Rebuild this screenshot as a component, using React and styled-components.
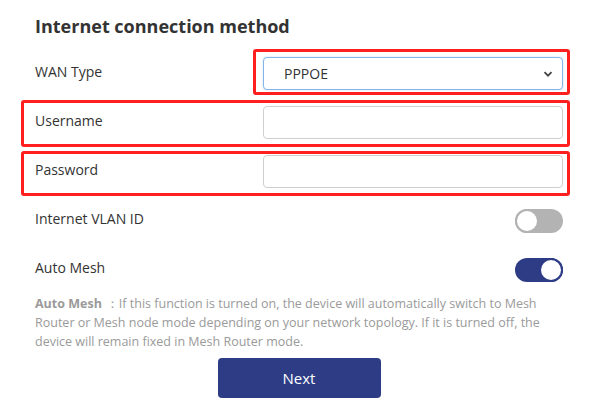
import React from "react";
import styled, { createGlobalStyle } from "styled-components";

const Global = createGlobalStyle`
  html, body { margin: 0; padding: 0; background: #fff; }
  body { font-family: "Open Sans", "Noto Sans", sans-serif; color: #333; }
  * { box-sizing: border-box; }
`;

const Page = styled.div`
  width: 604px;
  height: 415px;
  padding: 14px 41px 0 35px;
  overflow: hidden;
`;

const Title = styled.h2`
  margin: 0 0 19px;
  font-size: 18px;
  line-height: 24px;
  font-weight: 700;
  color: #333;
`;

const Row = styled.div`
  position: relative;
  display: flex;
  align-items: center;
  justify-content: space-between;
  height: 33px;
  margin-bottom: ${(p) => p.$gap ?? 16}px;
`;

const Label = styled.span`
  font-size: 14px;
  line-height: 20px;
  margin-top: -3px;
  color: #333;
`;

const Field = styled.div`
  position: relative;
  width: 300px;
  height: 33px;
`;

const Highlight = styled.div`
  position: absolute;
  top: ${(p) => p.$t}px;
  bottom: ${(p) => p.$b}px;
  left: ${(p) => p.$l}px;
  right: ${(p) => p.$r}px;
  border: 3px solid #ff1f1f;
  border-radius: 3px;
  pointer-events: none;
`;

const SelectBox = styled.div`
  display: flex;
  align-items: center;
  justify-content: space-between;
  height: 33px;
  padding: 0 9px 0 20px;
  border: 1px solid #86b5e9;
  border-radius: 4px;
  box-shadow: 0 0 2px rgba(134, 181, 233, 0.5);
  font-size: 14px;
  color: #333;
  background: #fff;
`;

const Input = styled.input`
  width: 300px;
  height: 33px;
  border: 1px solid #cfcfcf;
  border-radius: 4px;
  padding: 0 12px;
  font: inherit;
  outline: none;
`;

const Toggle = styled.span`
  position: relative;
  display: block;
  width: 48px;
  height: 24px;
  border-radius: 12px;
  background: ${(p) => (p.$on ? "#2e3c86" : "#b3b3b3")};
  &::after {
    content: "";
    position: absolute;
    top: 0;
    left: ${(p) => (p.$on ? "24px" : "0")};
    width: 24px;
    height: 24px;
    border-radius: 50%;
    background: #fff;
    border: 2px solid ${(p) => (p.$on ? "#2e3c86" : "#b3b3b3")};
    box-sizing: border-box;
  }
`;

const Note = styled.p`
  margin: 0;
  font-size: 12.5px;
  line-height: 19px;
  color: #9a9a9a;
  b { font-weight: 700; margin-right: 4px; }
`;

const ButtonRow = styled.div`
  display: flex;
  justify-content: center;
  margin-top: 7px;
`;

const NextButton = styled.button`
  width: 163px;
  height: 40px;
  border: none;
  border-radius: 4px;
  background: #2e3c86;
  color: #fff;
  font-family: inherit;
  font-size: 15px;
`;

const Chevron = () => (
  <svg width="10" height="6" viewBox="0 0 10 6">
    <path d="M1.5 1.2l3.5 3.5 3.5-3.5" fill="none" stroke="#444" strokeWidth="1.8" />
  </svg>
);

export default function App() {
  return (
    <Page>
      <Global />
      <Title>Internet connection method</Title>
      <Row>
        <Label>WAN Type</Label>
        <Field>
          <SelectBox>
            <span>PPPOE</span>
            <Chevron />
          </SelectBox>
          <Highlight $t={-8} $b={-5} $l={-10} $r={-7} />
        </Field>
      </Row>
      <Row>
        <Label>Username</Label>
        <Input />
        <Highlight $t={-6} $b={-8} $l={-14} $r={-7} />
      </Row>
      <Row>
        <Label>Password</Label>
        <Input type="password" />
        <Highlight $t={-4} $b={-8} $l={-14} $r={-7} />
      </Row>
      <Row>
        <Label>Internet VLAN ID</Label>
        <Toggle />
      </Row>
      <Row $gap={8}>
        <Label>Auto Mesh</Label>
        <Toggle $on />
      </Row>
      <Note>
        <b>Auto Mesh</b>：If this function is turned on, the device will automatically switch to Mesh
        Router or Mesh node mode depending on your network topology. If it is turned off, the
        device will remain fixed in Mesh Router mode.
      </Note>
      <ButtonRow>
        <NextButton>Next</NextButton>
      </ButtonRow>
    </Page>
  );
}
